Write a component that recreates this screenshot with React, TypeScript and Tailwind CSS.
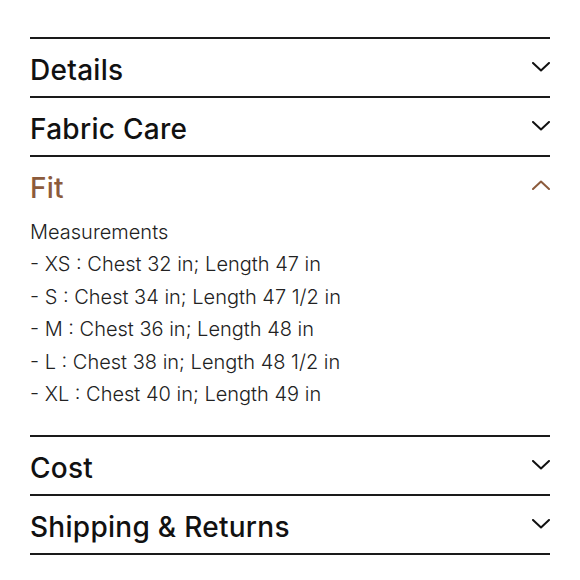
import { useState } from "react";

const sections = [
  { id: "details", title: "Details" },
  { id: "care", title: "Fabric Care" },
  { id: "fit", title: "Fit" },
  { id: "cost", title: "Cost" },
  { id: "shipping", title: "Shipping & Returns" },
];

const fitLines = [
  "Measurements",
  "- XS : Chest 32 in; Length 47 in",
  "- S : Chest 34 in; Length 47 1/2 in",
  "- M : Chest 36 in; Length 48 in",
  "- L : Chest 38 in; Length 48 1/2 in",
  "- XL : Chest 40 in; Length 49 in",
];

function Chevron({ up }: { up?: boolean }) {
  return (
    <svg width="18" height="10" viewBox="0 0 18 10" fill="none" className={up ? "rotate-180" : ""}>
      <path d="M1 1l8 7.5L17 1" stroke="currentColor" strokeWidth="2" strokeLinecap="round" strokeLinejoin="round" />
    </svg>
  );
}

export default function App() {
  const [open, setOpen] = useState("fit");

  return (
    <main className="min-h-screen bg-white px-[30px] pt-[37px] font-['Inter',sans-serif] text-[#111]">
      <div className="border-b-2 border-[#1a1a1a]">
        {sections.map((s) => {
          const isOpen = open === s.id;
          return (
            <section key={s.id} className="border-t-2 border-[#1a1a1a]">
              <button
                className={`flex h-[57px] w-full items-center justify-between pt-[4px] text-left ${isOpen ? "text-[#8c5b3c]" : "text-[#111]"}`}
                onClick={() => setOpen(isOpen ? "" : s.id)}
              >
                <span className="text-[28px] font-medium tracking-[0.01em]">{s.title}</span>
                <span className={`-mt-[5px] ${isOpen ? "text-[#8c5b3c]" : "text-[#111]"}`}>
                  <Chevron up={isOpen} />
                </span>
              </button>
              {isOpen && s.id === "fit" && (
                <div className="pt-[2px] pb-[25px] text-[20px] font-light leading-[32.4px] text-[#222]">
                  {fitLines.map((line) => (
                    <p key={line}>{line}</p>
                  ))}
                </div>
              )}
            </section>
          );
        })}
      </div>
    </main>
  );
}
